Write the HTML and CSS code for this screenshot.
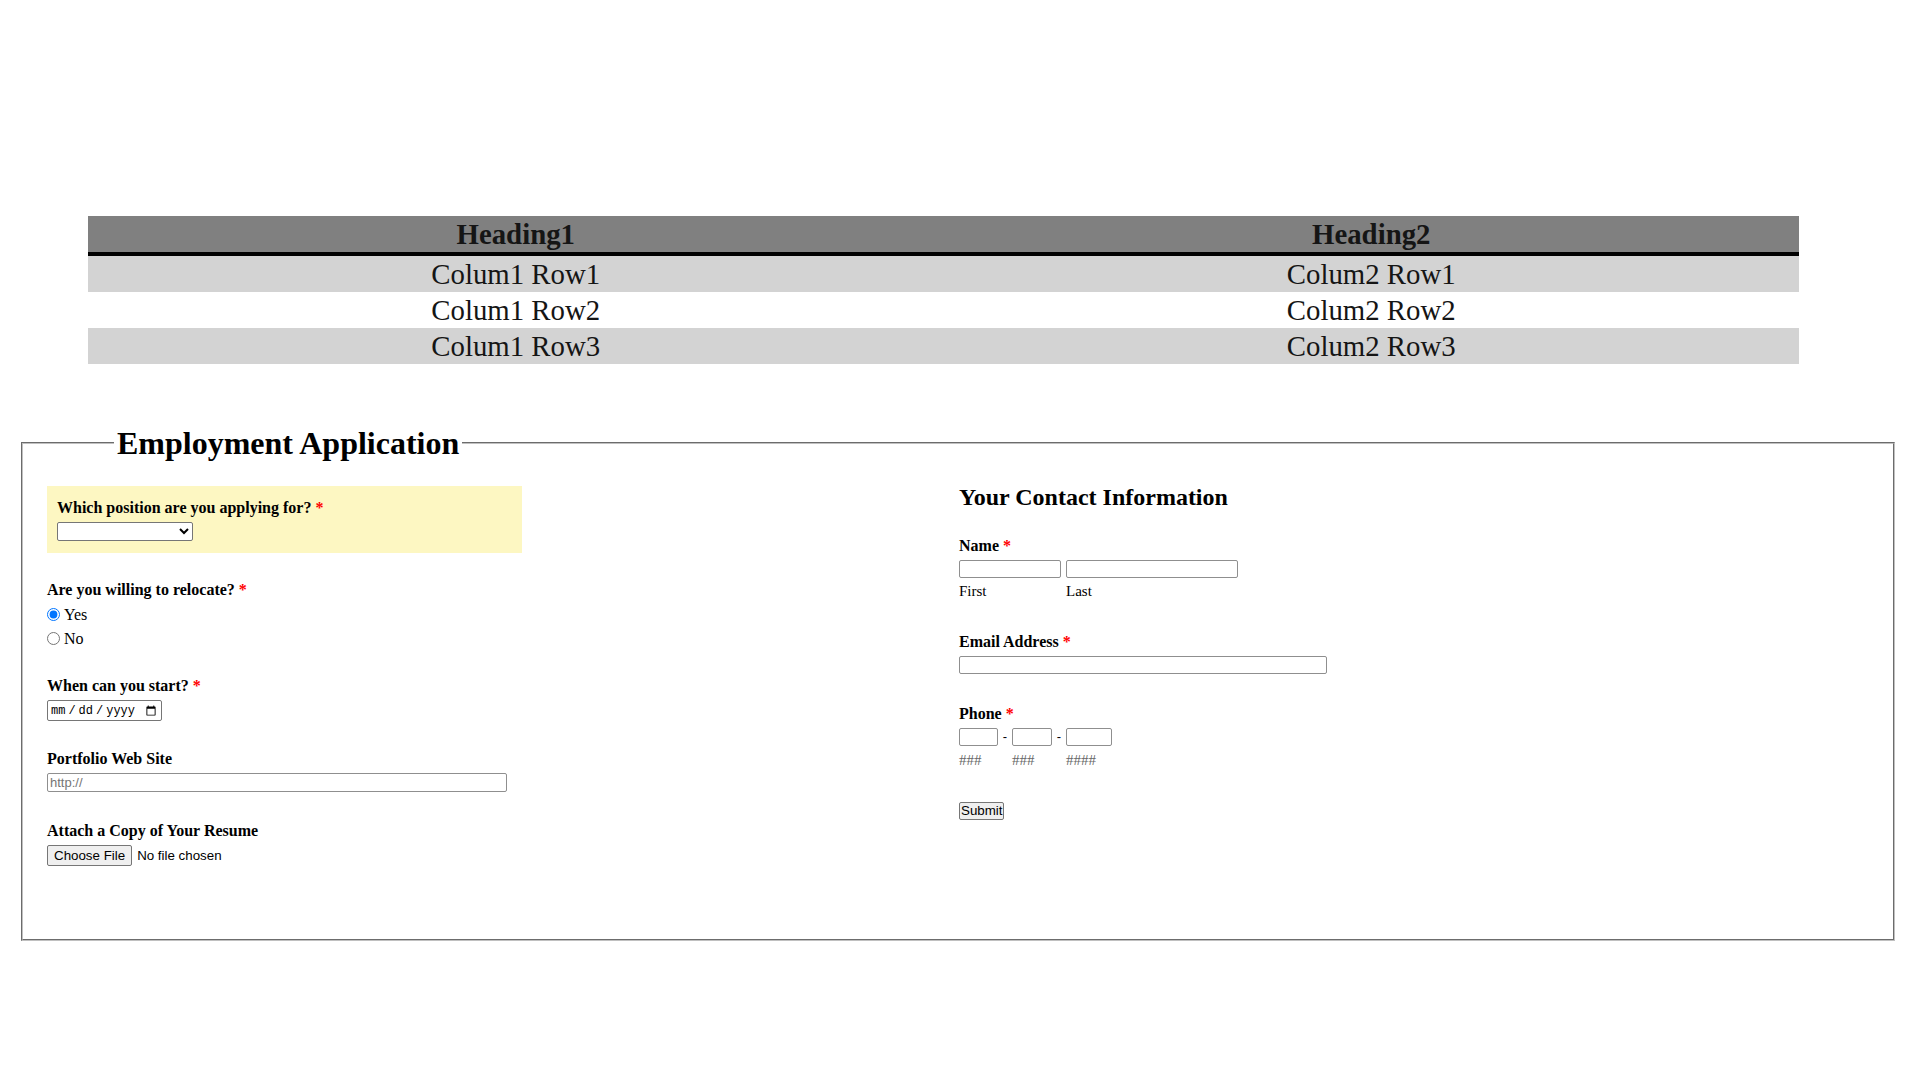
FILE: index.html
```html
<!DOCTYPE html>
<html>
<head>
<meta charset="utf-8">
<title>Employment Application</title>
<link rel="stylesheet" href="styles.css">
</head>
<body>
<table class="data-table">
  <thead>
    <tr><th>Heading1</th><th>Heading2</th></tr>
  </thead>
  <tbody>
    <tr><td>Colum1 Row1</td><td>Colum2 Row1</td></tr>
    <tr><td>Colum1 Row2</td><td>Colum2 Row2</td></tr>
    <tr><td>Colum1 Row3</td><td>Colum2 Row3</td></tr>
  </tbody>
</table>

<form class="app-form">
  <fieldset class="app-fieldset">
    <legend class="app-legend">Employment Application</legend>
    <div class="cols">
      <div class="col col-left">
        <div class="field highlight">
          <label class="lbl">Which position are you applying for? <span class="req">*</span></label>
          <select class="sel"><option></option></select>
        </div>
        <div class="field">
          <label class="lbl">Are you willing to relocate? <span class="req">*</span></label>
          <div class="radio-row"><input type="radio" name="reloc" class="radio" checked><span class="opt">Yes</span></div>
          <div class="radio-row"><input type="radio" name="reloc" class="radio"><span class="opt">No</span></div>
        </div>
        <div class="field">
          <label class="lbl">When can you start? <span class="req">*</span></label>
          <input type="date" class="date">
        </div>
        <div class="field portfolio-field">
          <label class="lbl">Portfolio Web Site</label>
          <input type="text" class="txt url" placeholder="http://">
        </div>
        <div class="field last">
          <label class="lbl">Attach a Copy of Your Resume</label>
          <input type="file" class="file">
        </div>
      </div>
      <div class="col col-right">
        <h2 class="sect">Your Contact Information</h2>
        <div class="field name-field">
          <label class="lbl">Name <span class="req">*</span></label>
          <div class="row">
            <div class="sub"><input type="text" class="txt first"><span class="hint">First</span></div>
            <div class="sub"><input type="text" class="txt lastn"><span class="hint">Last</span></div>
          </div>
        </div>
        <div class="field email-field">
          <label class="lbl">Email Address <span class="req">*</span></label>
          <input type="text" class="txt email">
        </div>
        <div class="field phone-field">
          <label class="lbl">Phone <span class="req">*</span></label>
          <div class="row">
            <div class="sub"><input type="text" class="txt ph1"><span class="hash">###</span></div>
            <span class="dash">-</span>
            <div class="sub"><input type="text" class="txt ph2"><span class="hash">###</span></div>
            <span class="dash">-</span>
            <div class="sub"><input type="text" class="txt ph3"><span class="hash">####</span></div>
          </div>
        </div>
        <div class="field">
          <button type="button" class="submit">Submit</button>
        </div>
      </div>
    </div>
  </fieldset>
</form>
</body>
</html>
```
FILE: styles.css
```css
html, body {
  margin: 0;
  padding: 0;
  background: #ffffff;
}
body {
  font-family: "Liberation Serif", "Times New Roman", serif;
  color: #000;
}

/* ---------- table ---------- */
.data-table {
  margin: 216px 0 0 88px;
  width: 1711px;
  border-collapse: collapse;
  table-layout: fixed;
  font-size: 28.8px;
}
.data-table th {
  background: #808080;
  color: #151515;
  font-weight: bold;
  height: 36px;
  padding: 0;
  line-height: 34px;
  border-bottom: 4px solid #000;
  text-align: center;
}
.data-table td {
  height: 36px;
  padding: 0;
  line-height: 34px;
  text-align: center;
  color: #151515;
}
.data-table tbody tr:nth-child(odd) td {
  background: #d3d3d3;
}

/* ---------- form ---------- */
.app-form {
  margin: 62px 0 0 21px;
}
.app-fieldset {
  box-sizing: border-box;
  width: 1874px;
  margin: 0;
  border: 2px groove #c0c0c0;
  padding: 23px 22px 73px 24px;
}
.app-legend {
  margin-left: 67px;
  padding: 0 3px;
  font-size: 32px;
  font-weight: bold;
  line-height: 34px;
}
.cols {
  display: grid;
  grid-template-columns: 1fr 1fr;
}
.col {
  display: flex;
  flex-direction: column;
  align-items: flex-start;
}
.field {
  display: flex;
  flex-direction: column;
  align-items: flex-start;
  margin-bottom: 29px;
}
.field.last {
  margin-bottom: 0;
}
.portfolio-field {
  margin-bottom: 30px;
}
.name-field {
  margin-bottom: 33px;
}
.email-field {
  margin-bottom: 31px;
}
.phone-field {
  margin-bottom: 30px;
}
.lbl {
  font-size: 16px;
  font-weight: bold;
  line-height: 17px;
  margin-bottom: 6px;
}
.req {
  color: #ff0000;
}
.highlight {
  margin: 3px 0 28px 0;
  width: 475px;
  box-sizing: border-box;
  padding: 13px 10px 12px 10px;
  background: #fdf7c2;
}

/* controls */
.sel {
  box-sizing: border-box;
  width: 136px;
  height: 19px;
  margin: 0;
  font-family: "Liberation Sans", Arial, sans-serif;
  font-size: 13px;
  border: 1px solid #767676;
  border-radius: 2px;
  background: #fff;
}
.radio-row {
  display: flex;
  align-items: center;
  height: 20px;
  margin-top: 4px;
}
.radio-row:first-of-type {
  margin-top: 0;
}
.radio {
  width: 13px;
  height: 13px;
  margin: 0 4px 0 0;
}
.opt {
  font-size: 16px;
  line-height: 17px;
}
.date {
  box-sizing: border-box;
  width: 115px;
  height: 21px;
  margin: 0;
  padding: 0 2px;
  font-family: "Liberation Mono", "Liberation Sans", monospace;
  font-size: 12px;
  border: 1px solid #767676;
  border-radius: 2px;
}
.date::-webkit-datetime-edit-text {
  padding: 0 2px;
}
.txt {
  box-sizing: border-box;
  height: 18px;
  margin: 0;
  padding: 1px 2px;
  font-family: "Liberation Sans", Arial, sans-serif;
  font-size: 13px;
  border: 1px solid #8f8f8f;
  border-radius: 2px;
  background: #fff;
}
.txt::placeholder {
  color: #757575;
}
.url {
  width: 460px;
  height: 19px;
}
.file {
  margin: 0;
  font-family: "Liberation Sans", Arial, sans-serif;
  font-size: 13.33px;
}
.file::file-selector-button {
  box-sizing: border-box;
  height: 21px;
  margin: 0 5px 0 0;
  padding: 1px 6px;
  font-family: "Liberation Sans", Arial, sans-serif;
  font-size: 13.33px;
  border: 1px solid #767676;
  border-radius: 2px;
  background: #efefef;
}

/* right column */
.sect {
  margin: 0 0 26px 0;
  font-size: 24px;
  line-height: 28px;
  font-weight: bold;
}
.row {
  display: flex;
  align-items: flex-start;
}
.sub {
  display: flex;
  flex-direction: column;
  align-items: flex-start;
}
.hint {
  margin-top: 5px;
  font-size: 15px;
  line-height: 17px;
}
.hash {
  margin-top: 6px;
  font-size: 15px;
  line-height: 17px;
  color: #666;
}
.first { width: 102px; margin-right: 5px; }
.lastn { width: 172px; }
.email { width: 368px; }
.ph1 { width: 39px; }
.ph2 { width: 40px; }
.ph3 { width: 46px; }
.dash {
  width: 14px;
  text-align: center;
  font-family: "Liberation Sans", Arial, sans-serif;
  font-size: 13px;
  line-height: 18px;
}
.submit {
  box-sizing: border-box;
  height: 18px;
  margin: 3px 0 0 0;
  padding: 0 1px;
  font-family: "Liberation Sans", Arial, sans-serif;
  font-size: 13.33px;
  line-height: 14px;
  border: 1px solid #767676;
  border-radius: 2px;
  background: #efefef;
  color: #000;
}
```
